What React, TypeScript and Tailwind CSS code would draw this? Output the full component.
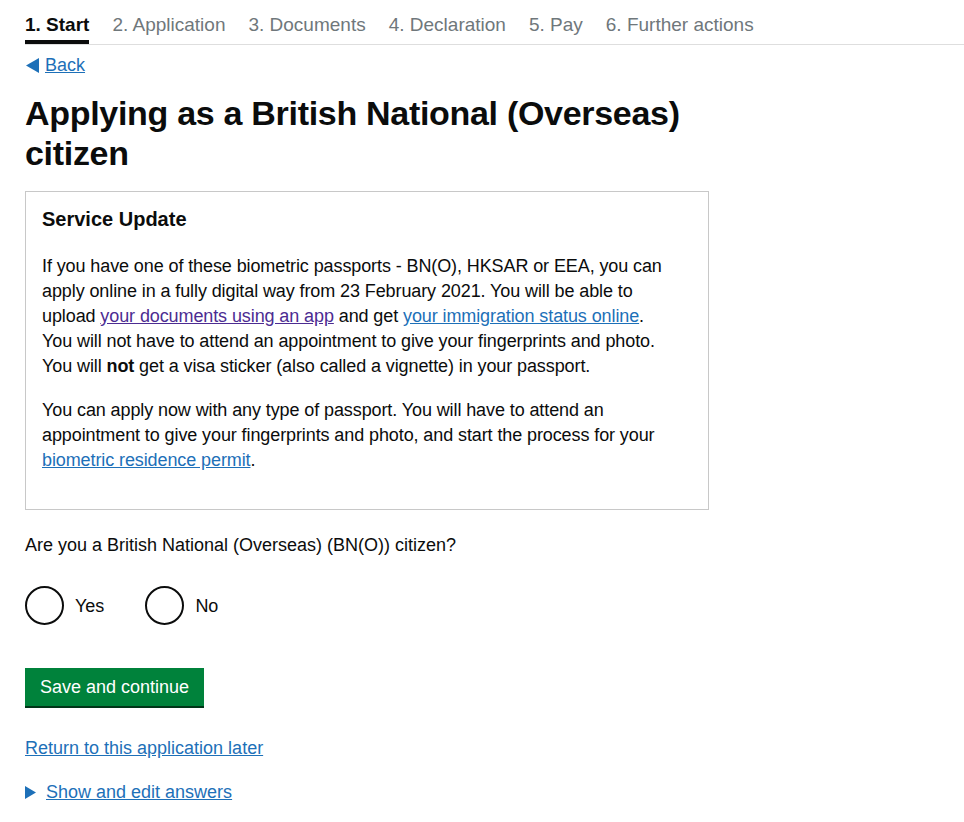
import React from "react";

const steps = [
  "1. Start",
  "2. Application",
  "3. Documents",
  "4. Declaration",
  "5. Pay",
  "6. Further actions",
];

function StepNav() {
  return (
    <nav className="flex gap-[23px] border-b border-[#dedede] text-[19px] leading-[25px]">
      {steps.map((s, i) => (
        <div
          key={s}
          className={
            i === 0
              ? "pt-[12px] pb-[3px] border-b-4 border-[#0b0c0c] font-bold text-[#0b0c0c]"
              : "pt-[12px] pb-[7px] text-[#6f777b]"
          }
        >
          {s}
        </div>
      ))}
    </nav>
  );
}

function Radio({ label }: { label: string }) {
  return (
    <label className="flex items-center gap-[11px]">
      <span className="w-[39px] h-[39px] rounded-full border-2 border-[#0b0c0c] bg-white" />
      <span className="text-[18px] pt-[2px]">{label}</span>
    </label>
  );
}

export default function App() {
  return (
    <div className="min-h-screen bg-white pl-[25px] font-['Liberation_Sans',Arial,sans-serif] text-[#0b0c0c]">
      <StepNav />

      <a href="#" className="mt-[8px] flex items-center gap-[5px] w-fit text-[18px] leading-[25px] text-[#1d70b8] underline">
        <svg width="15" height="15" viewBox="0 0 15 15" className="fill-[#1d70b8]">
          <path d="M1 7.5 14 0v15z" />
        </svg>
        Back
      </a>

      <h1 className="mt-[15px] w-[680px] text-[34px] leading-[40px] font-bold tracking-[-0.3px]">
        Applying as a British National (Overseas) citizen
      </h1>

      <section className="mt-[18px] w-[684px] border border-[#c8c8c8] px-[16px] pt-[15px] pb-[36px] text-[18px] leading-[25px] whitespace-nowrap">
        <h2 className="text-[20px] leading-[25px] font-bold">Service Update</h2>
        <p className="mt-[22px] tracking-[-0.1px]">
          If you have one of these biometric passports - BN(O), HKSAR or EEA, you can
          <br />
          apply online in a fully digital way from 23 February 2021. You will be able to
          <br />
          upload <a href="#" className="text-[#4c2c92] underline">your documents using an app</a> and get{" "}
          <a href="#" className="text-[#1d70b8] underline">your immigration status online</a>.
          <br />
          You will not have to attend an appointment to give your fingerprints and photo.
          <br />
          You will <strong>not</strong> get a visa sticker (also called a vignette) in your passport.
        </p>
        <p className="mt-[19px] tracking-[-0.1px]">
          You can apply now with any type of passport. You will have to attend an
          <br />
          appointment to give your fingerprints and photo, and start the process for your
          <br />
          <a href="#" className="text-[#1d70b8] underline">biometric residence permit</a>.
        </p>
      </section>

      <p className="mt-[23px] text-[18px] leading-[25px]">
        Are you a British National (Overseas) (BN(O)) citizen?
      </p>

      <div className="mt-[28px] flex gap-[41px]">
        <Radio label="Yes" />
        <Radio label="No" />
      </div>

      <button className="mt-[43px] h-[38px] px-[15px] bg-[#00823b] text-white text-[18px] shadow-[0_2px_0_#003618]">
        Save and continue
      </button>

      <div className="mt-[30px] text-[18px] leading-[25px]">
        <a href="#" className="text-[#1d70b8] underline">Return to this application later</a>
      </div>

      <div className="mt-[19px] flex items-center gap-[10px] text-[18px] leading-[25px] text-[#1d70b8]">
        <svg width="11" height="13" viewBox="0 0 11 13" className="fill-[#1d70b8]">
          <path d="M0 0l11 6.5L0 13z" />
        </svg>
        <a href="#" className="underline">Show and edit answers</a>
      </div>
    </div>
  );
}
